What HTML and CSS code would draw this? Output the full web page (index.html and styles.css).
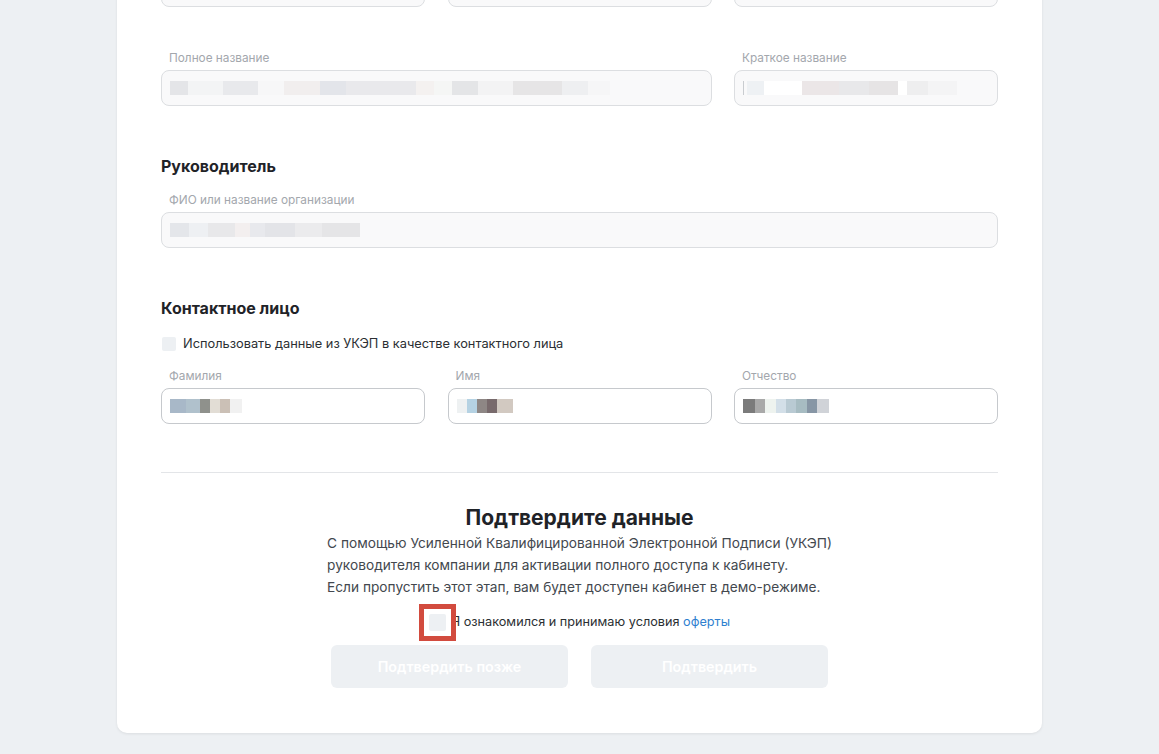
FILE: index.html
```html
<!DOCTYPE html>
<html>
<head>
    <meta http-equiv="content-type" content="text/html; charset=UTF-8">
    <meta name="viewport" content="width=device-width, initial-scale=1.0">
    <title>Регистрация компании</title>
    <link rel="stylesheet" href="styles.css">
</head>

<body>
    <div class="card">
        <div class="row3">
            <div class="input disabled"><span class="px px-a w-120"></span></div>
            <div class="input disabled"><span class="px px-a w-100"></span></div>
            <div class="input disabled"><span class="px px-a w-120"></span></div>
        </div>

        <div class="row3 gap-top">
            <div class="field span2">
                <div class="label">Полное название</div>
                <div class="input disabled"><span class="px px-a w-440"></span></div>
            </div>
            <div class="field">
                <div class="label">Краткое название</div>
                <div class="input disabled"><span class="caret"></span><span class="px px-b w-210"></span></div>
            </div>
        </div>

        <h2>Руководитель</h2>
        <div class="field">
            <div class="label">ФИО или название организации</div>
            <div class="input disabled"><span class="px px-c w-190"></span></div>
        </div>

        <h2>Контактное лицо</h2>
        <label class="check-row">
            <span class="checkbox"></span>
            <span>Использовать данные из УКЭП в качестве контактного лица</span>
        </label>
        <div class="row3">
            <div class="field">
                <div class="label">Фамилия</div>
                <div class="input"><span class="px px-d w-72"></span></div>
            </div>
            <div class="field">
                <div class="label">Имя</div>
                <div class="input"><span class="px px-e w-56"></span></div>
            </div>
            <div class="field">
                <div class="label">Отчество</div>
                <div class="input"><span class="px px-f w-86"></span></div>
            </div>
        </div>

        <div class="confirm">
            <h3>Подтвердите данные</h3>
            <p>С помощью Усиленной Квалифицированной Электронной Подписи (УКЭП)<br>
            руководителя компании для активации полного доступа к кабинету.<br>
            Если пропустить этот этап, вам будет доступен кабинет в демо-режиме.</p>
            <label class="agree">
                <span class="checkbox big marked"></span>
                <span>Я ознакомился и принимаю условия <a href="#">оферты</a></span>
            </label>
            <div class="buttons">
                <button class="btn" disabled>Подтвердить позже</button>
                <button class="btn" disabled>Подтвердить</button>
            </div>
        </div>
    </div>
</body>
</html>
```

FILE: styles.css
```css
body {
    margin: 0;
    min-height: 754px;
    background: #edf0f3;
    font-family: Inter, "Noto Sans", sans-serif;
    color: #1f2328;
    overflow: hidden;
}

.card {
    width: 925px;
    box-sizing: border-box;
    margin: -59px auto 0;
    padding: 30px 44px 45px;
    background: #fff;
    border-radius: 10px;
    box-shadow: 0 1px 3px rgba(0, 0, 0, 0.08);
}

.row3 {
    display: grid;
    grid-template-columns: repeat(3, 1fr);
    column-gap: 22.5px;
}

.gap-top {
    margin-top: 44px;
}

.span2 {
    grid-column: span 2;
}

.label {
    font-size: 11.8px;
    line-height: 14px;
    color: #a3a7ad;
    margin: 0 0 5px 8px;
}

.input {
    height: 36px;
    box-sizing: border-box;
    border: 1px solid #c6c9cd;
    border-radius: 8px;
    background: #fff;
    display: flex;
    align-items: center;
    padding: 0 8px;
}

.input.disabled {
    border-color: #dcdee1;
    background: #f9f9fa;
}

.caret {
    width: 1px;
    height: 14px;
    background: #c9ccd0;
    margin-right: 3px;
}

/* размытые данные */
.px {
    height: 14px;
    display: block;
}

.px-a {
    background: linear-gradient(90deg,
        #e4e5e8 0 4%, #f3f4f5 4% 12%, #e8e9ec 12% 20%, #f7f7f8 20% 26%,
        #f1eeee 26% 34%, #e3e5ea 34% 40%, #e9e9ec 40% 56%, #f4f1f0 56% 60%,
        #f5f6f5 60% 64%, #e4e5e7 64% 70%, #f3f3f4 70% 78%, #e6e5e6 78% 89%,
        #eeeff1 89% 95%, #f6f6f7 95% 100%);
}

.px-b {
    background: linear-gradient(90deg,
        #eef1f4 0 8%, #fff 8% 26%, #ebe6e7 26% 44%, #e8e8ea 44% 58%,
        #e6e4e5 58% 72%, #fff 72% 76%, #eeeeef 76% 86%, #f4f4f5 86% 100%);
}

.px-c {
    background: linear-gradient(90deg,
        #e4e6ea 0 10%, #eef0f3 10% 20%, #e8e8ea 20% 34%, #f3efef 34% 42%,
        #e8e9ed 42% 50%, #e3e4e8 50% 66%, #ebebed 66% 80%, #e5e5e7 80% 100%);
}

.px-d {
    background: linear-gradient(90deg,
        #a8b8c8 0 22%, #b0c1cc 22% 42%, #8f918c 42% 56%, #e2ddd5 56% 70%,
        #cbc0b6 70% 84%, #f1f1f1 84% 100%);
}

.px-e {
    background: linear-gradient(90deg,
        #eef1f2 0 18%, #b5d2e3 18% 36%, #8e8785 36% 54%, #786a6c 54% 72%,
        #d2c9c1 72% 100%);
}

.px-f {
    background: linear-gradient(90deg,
        #7b7b7b 0 14%, #a9a9a9 14% 26%, #eef3ef 26% 38%, #d3dfe8 38% 50%,
        #b9cad3 50% 62%, #a7bcc2 62% 74%, #8796a5 74% 86%, #d0d3d8 86% 100%);
}

.w-56 { width: 56px; }
.w-72 { width: 72px; }
.w-86 { width: 86px; }
.w-100 { width: 100px; }
.w-120 { width: 120px; }
.w-190 { width: 190px; }
.w-210 { width: 210px; }
.w-440 { width: 440px; }

h2 {
    font-size: 16px;
    line-height: 20px;
    font-weight: 700;
    margin: 50px 0 17px;
}

.check-row {
    display: flex;
    align-items: center;
    gap: 7px;
    font-size: 12.8px;
    line-height: 18px;
    color: #2b2f33;
    margin: 12px 0 16px 1px;
}

.checkbox {
    width: 14px;
    height: 14px;
    border-radius: 2px;
    background: #edf0f3;
    flex: none;
}

.checkbox.big {
    width: 17px;
    height: 17px;
}

/* выделение на скриншоте */
.checkbox.marked {
    position: relative;
}

.checkbox.marked::after {
    content: "";
    position: absolute;
    inset: -10px;
    border: 5px solid #d24b3e;
}

.confirm {
    margin-top: 48px;
    border-top: 1px solid #e3e5e8;
    text-align: center;
}

h3 {
    font-size: 21px;
    line-height: 26px;
    font-weight: 700;
    margin: 32px 0 1px;
}

p {
    display: inline-block;
    text-align: left;
    font-size: 13.7px;
    line-height: 22px;
    color: #43484e;
    margin: 0;
    vertical-align: top;
}

.agree {
    display: flex;
    justify-content: center;
    align-items: center;
    gap: 6px;
    font-size: 12.7px;
    line-height: 18px;
    color: #2b2f33;
    margin-top: 15px;
}

.agree a {
    color: #2f7fcf;
    text-decoration: none;
}

.buttons {
    display: flex;
    justify-content: center;
    gap: 23px;
    margin-top: 14px;
}

.btn {
    width: 237px;
    height: 43px;
    border: none;
    border-radius: 6px;
    background: #edf0f3;
    color: #fff;
    font-family: inherit;
    font-size: 14.3px;
    font-weight: 600;
}
```
